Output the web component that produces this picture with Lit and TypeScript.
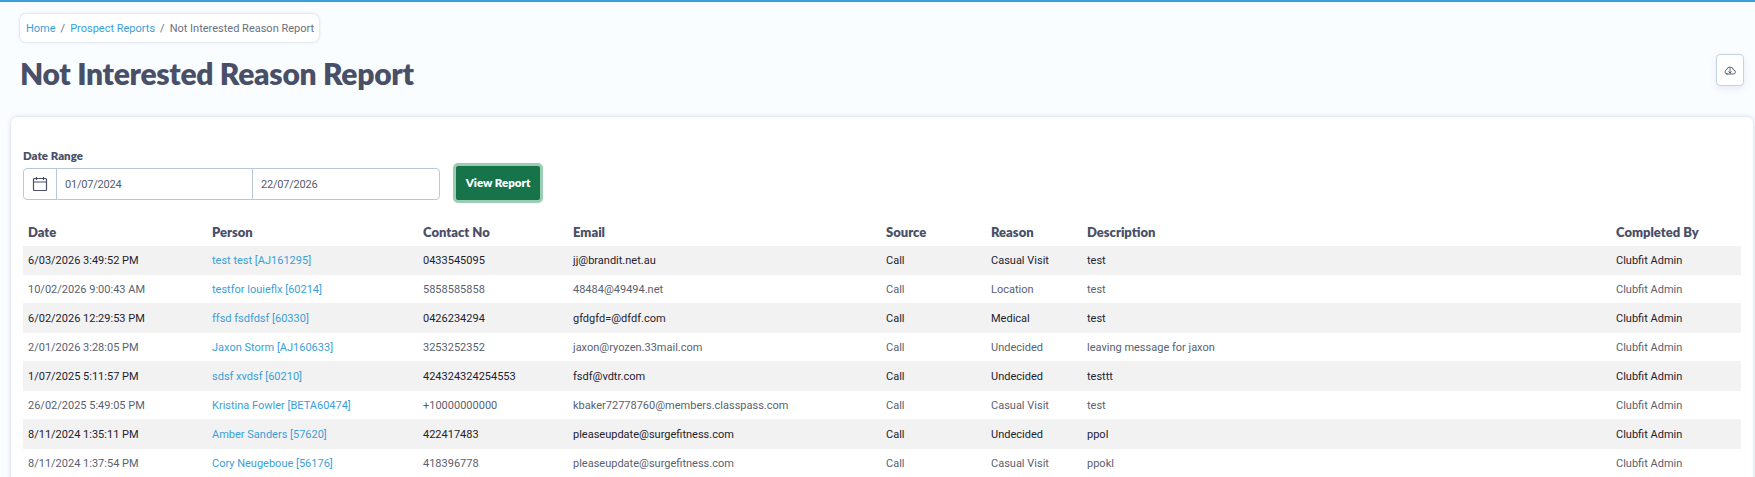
import { LitElement, html, css } from "lit";
import { customElement } from "lit/decorators.js";

const rows = [
  ["6/03/2026 3:49:52 PM", "test test [AJ161295]", "0433545095", "jj@brandit.net.au", "Call", "Casual Visit", "test", "Clubfit Admin"],
  ["10/02/2026 9:00:43 AM", "testfor louieflx [60214]", "5858585858", "48484@49494.net", "Call", "Location", "test", "Clubfit Admin"],
  ["6/02/2026 12:29:53 PM", "ffsd fsdfdsf [60330]", "0426234294", "gfdgfd=@dfdf.com", "Call", "Medical", "test", "Clubfit Admin"],
  ["2/01/2026 3:28:05 PM", "Jaxon Storm [AJ160633]", "3253252352", "jaxon@ryozen.33mail.com", "Call", "Undecided", "leaving message for jaxon", "Clubfit Admin"],
  ["1/07/2025 5:11:57 PM", "sdsf xvdsf [60210]", "424324324254553", "fsdf@vdtr.com", "Call", "Undecided", "testtt", "Clubfit Admin"],
  ["26/02/2025 5:49:05 PM", "Kristina Fowler [BETA60474]", "+10000000000", "kbaker72778760@members.classpass.com", "Call", "Casual Visit", "test", "Clubfit Admin"],
  ["8/11/2024 1:35:11 PM", "Amber Sanders [57620]", "422417483", "pleaseupdate@surgefitness.com", "Call", "Undecided", "ppol", "Clubfit Admin"],
  ["8/11/2024 1:37:54 PM", "Cory Neugeboue [56176]", "418396778", "pleaseupdate@surgefitness.com", "Call", "Casual Visit", "ppokl", "Clubfit Admin"],
];
const heads = ["Date", "Person", "Contact No", "Email", "Source", "Reason", "Description", "Completed By"];

@customElement("app-root")
export class AppRoot extends LitElement {
  static styles = css`
    :host {
      display: block;
      height: 477px;
      overflow: hidden;
      background: #fafdff;
      border-top: 2px solid #3a9fd8;
      box-sizing: border-box;
      font-family: Roboto, "Liberation Sans", sans-serif;
      color: #4a4f68;
      font-size: 11px;
    }
    .head { display: flex; justify-content: space-between; padding: 12px 11px 0 20px; height: 115px; box-sizing: border-box; }
    .crumb {
      display: inline-flex; align-items: center; height: 28px; box-sizing: border-box; padding: 0 5px 0 6px;
      background: #fff; border-radius: 6px; box-shadow: 0 0 3px rgba(90,100,170,.35);
      color: #6b7080; white-space: nowrap;
    }
    .crumb a { color: #3a9fd8; }
    .crumb i { font-style: normal; margin: 0 5px; }
    h1 { margin: 13px 0 0; font-family: Lato, sans-serif; font-size: 30px; line-height: 36px; font-weight: 800; color: #4a4f68; letter-spacing: -.3px; }
    .dl {
      width: 28px; height: 32px; margin-top: 40px; box-sizing: border-box; border: 1px solid #c5d2e0; border-radius: 4px;
      background: #fff; display: flex; align-items: center; justify-content: center; box-shadow: 0 3px 6px rgba(90,100,170,.12);
    }
    .card {
      margin: 0 2px 0 11px; background: #fff; border-radius: 6px; padding: 32px 12px 0 12px;
      box-shadow: 0 0 4px rgba(90,100,170,.3); height: 400px; box-sizing: border-box;
    }
    label { display: block; font-family: Lato, sans-serif; font-weight: 800; font-size: 11.5px; line-height: 14px; }
    .filter { display: flex; gap: 13px; align-items: flex-end; }
    .range { display: flex; width: 417px; height: 32px; box-sizing: border-box; border: 1px solid #b9c8d8; border-radius: 4px; margin-bottom: 3px; }
    .range > div { display: flex; align-items: center; }
    .cal { width: 32px; justify-content: center; border-right: 1px solid #b9c8d8; flex: none; }
    .date { width: 195px; flex: none; padding-left: 8px; box-sizing: border-box; font-size: 11px; letter-spacing: -.2px; color: #555a72; }
    .date + .date { border-left: 1px solid #b9c8d8; flex: 1; }
    .btn {
      width: 90px; height: 40px; box-sizing: border-box; border: 3px solid #9bcdb4; border-radius: 5px; background: #17734a;
      color: #fff; font-weight: 800; font-size: 11.5px; display: flex; align-items: center; justify-content: center; white-space: nowrap;
      padding-bottom: 2px; font-family: Lato, sans-serif;
    }
    table { border-collapse: collapse; table-layout: fixed; width: 1718px; margin-top: 10px; }
    th { text-align: left; font-family: Lato, sans-serif; font-size: 13px; font-weight: 800; color: #4a4f68; height: 33px; padding: 5px 0 0 5px; box-sizing: border-box; white-space: nowrap; }
    td { padding: 0 0 0 5px; font-size: 11px; color: #5a5f70; white-space: nowrap; overflow: hidden; }
    td a { color: #3a9fd8; }
    tbody tr { height: 28px; }
    tbody tr:nth-child(odd) { height: 30px; background: #f2f2f2; }
    tbody tr:nth-child(odd) td { color: #1f2230; }
    tbody tr:nth-child(odd) td a { color: #3a9fd8; }
    tbody tr:first-child { height: 29px; }
  `;

  render() {
    const w = [184, 211, 150, 313, 105, 96, 529, 130];
    return html`
      <div class="head">
        <div>
          <div class="crumb"><a>Home</a><i>/</i><a>Prospect Reports</a><i>/</i><span>Not Interested Reason Report</span></div>
          <h1>Not Interested Reason Report</h1>
        </div>
        <div class="dl">
          <svg width="12" height="12" viewBox="0 0 24 24" fill="none" stroke="#4a4f68" stroke-width="1.8" stroke-linecap="round" stroke-linejoin="round">
            <path d="M6 20h12.5a4 4 0 0 0 .6-8A7.2 7.2 0 0 0 5 11.8 4.2 4.2 0 0 0 6 20z"/><path d="M12 9v9M9.5 15.5 12 18l2.5-2.5"/>
          </svg>
        </div>
      </div>
      <div class="card">
        <label>Date Range</label>
        <div class="filter">
          <div class="range">
            <div class="cal">
              <svg width="16" height="16" viewBox="0 0 16 16" fill="none" stroke="#4a4f68" stroke-width="1.2">
                <rect x="1.5" y="2.5" width="13" height="12" rx="1"/><path d="M1.5 6h13M4.5 1v3M11.5 1v3"/>
              </svg>
            </div>
            <div class="date">01/07/2024</div>
            <div class="date">22/07/2026</div>
          </div>
          <div class="btn">View Report</div>
        </div>
        <table>
          <colgroup>${w.map((x) => html`<col style="width:${x}px" />`)}</colgroup>
          <thead><tr>${heads.map((h) => html`<th>${h}</th>`)}</tr></thead>
          <tbody>
            ${rows.map((r) => html`<tr>${r.map((c, i) => html`<td>${i === 1 ? html`<a>${c}</a>` : c}</td>`)}</tr>`)}
          </tbody>
        </table>
      </div>
    `;
  }
}
